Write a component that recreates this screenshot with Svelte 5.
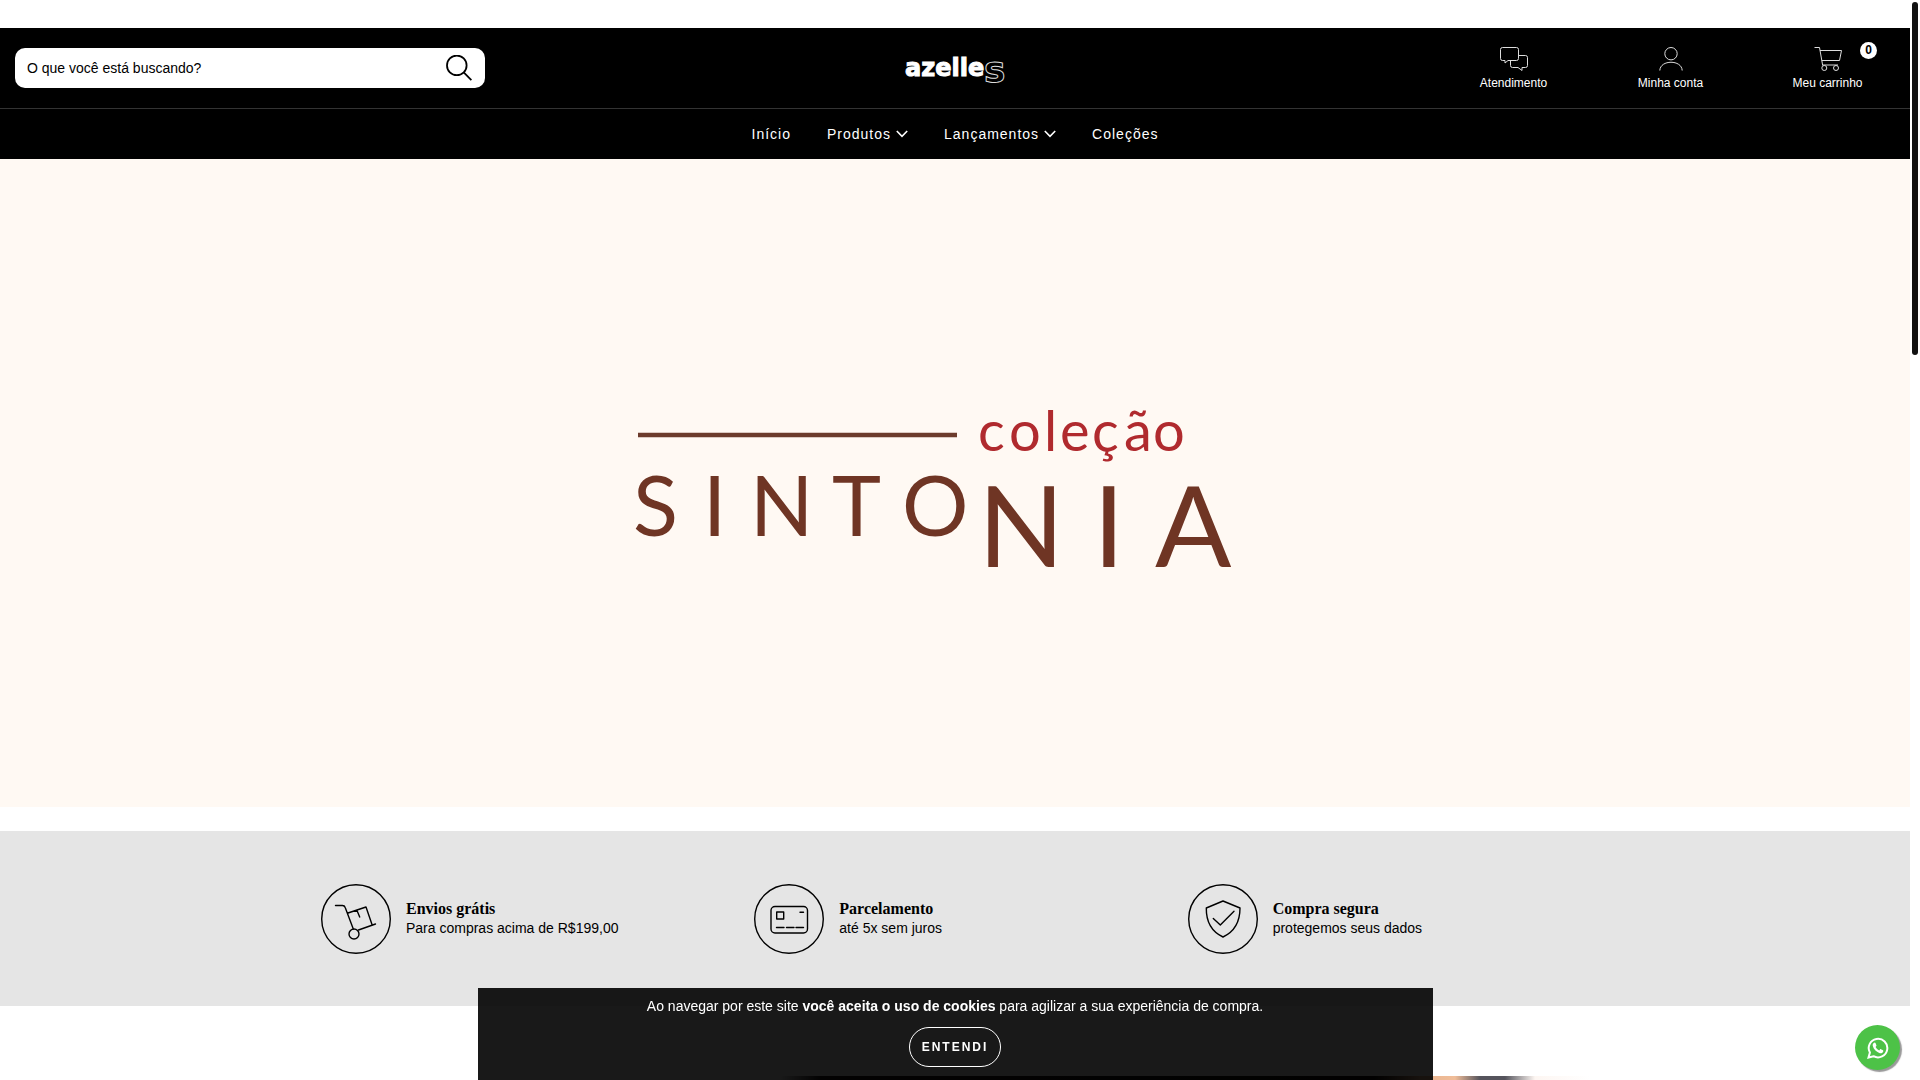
<script>
  const menu = [
    { label: 'Início' },
    { label: 'Produtos', sub: true },
    { label: 'Lançamentos', sub: true },
    { label: 'Coleções' }
  ];
  const benefits = [
    { icon: 'truck', title: 'Envios grátis', text: 'Para compras acima de R$199,00' },
    { icon: 'card', title: 'Parcelamento', text: 'até 5x sem juros' },
    { icon: 'shield', title: 'Compra segura', text: 'protegemos seus dados' }
  ];
  let search = $state('');
  let cookies = $state(true);
</script>

<div class="page">
  <header>
    <div class="top">
      <form class="search" role="search" onsubmit={(e) => e.preventDefault()}>
        <input type="text" aria-label="Buscar" placeholder="O que você está buscando?" bind:value={search} />
        <button type="submit" aria-label="Buscar">
          <svg width="26" height="26" viewBox="0 0 26 26" fill="none" stroke="#000" stroke-width="1.8">
            <circle cx="10.8" cy="10.4" r="9.8" /><path d="M17.7 17.4 25.4 25.2" />
          </svg>
        </button>
      </form>

      <a class="logo" href="#inicio" aria-label="azelles">
        <svg width="104" height="48" viewBox="0 0 104 48">
          <text x="2" y="32" class="brand">azelle</text>
          <text x="81" y="38" class="brand-s">s</text>
        </svg>
      </a>

      <div class="tools">
        <a href="#atendimento">
          <svg width="28" height="24" viewBox="0 0 28 24">
            <path d="M10 13.5H8L5 16V13.5H2.5Q.5 13.5 .5 11.5V2.5Q.5.5 2.5.5H16.5Q18.5.5 18.5 2.5V11.5Q18.5 13.5 16.5 13.5H10" />
            <path d="M19 8.5H25.5Q27.5 8.5 27.5 10.5V18.5Q27.5 20.5 25.5 20.5H22V23.5L18 20.5H12.5Q10.5 20.5 10.5 18.5V14" />
          </svg>
          <span>Atendimento</span>
        </a>
        <a href="#conta">
          <svg width="24" height="24" viewBox="0 0 24 24">
            <circle cx="12" cy="6.7" r="6.2" />
            <path d="M.8 23.5C1.2 12.5 22.8 12.5 23.2 23.5" />
          </svg>
          <span>Minha conta</span>
        </a>
        <a href="#carrinho">
          <svg width="28" height="24" viewBox="0 0 28 24">
            <path d="M.5.5H5.5L8.7 18.5M6 3.5H27.5L25.5 13.5H7.8M8.700 18H24" />
            <circle cx="10.3" cy="21" r="2.5" /><circle cx="22" cy="21" r="2.5" />
          </svg>
          <span>Meu carrinho</span>
          <b class="badge">0</b>
        </a>
      </div>
    </div>

    <nav>
      {#each menu as item}
        <a href="#menu">
          {item.label}
          {#if item.sub}
            <svg width="12" height="8" viewBox="0 0 12 8" fill="none" stroke="#fff" stroke-width="1.6"><path d="M.8 1 6 6.3 11.2 1" /></svg>
          {/if}
        </a>
      {/each}
    </nav>
  </header>

  <a class="hero" href="#sintonia" aria-label="Coleção Sintonia">
    <svg viewBox="0 0 1910 648">
      <path d="M638 276H957" stroke="#6c3b2c" stroke-width="4.5" />
      <text class="small" y="292" x="978 1009 1044 1060 1092 1124 1153">coleção</text>
      <text class="mid" y="377" x="633 703 750 832 902">SINTO</text>
      <text class="big" y="408" x="978 1093 1155">NIA</text>
    </svg>
  </a>

  <section class="benefits">
    <div class="row">
      {#each benefits as b}
        <div class="benefit">
          <svg width="70" height="70" viewBox="0 0 70 70" fill="none" stroke="#000" stroke-width="1.4" stroke-linecap="round" stroke-linejoin="round">
            <circle cx="35" cy="35" r="34.3" />
            {#if b.icon === 'truck'}
              <path d="M14.5 21.5H21.5Q23.5 21.5 24.2 23.5L32.3 45M27 29 45 23 51 40.5M37.5 46 54.5 40M36 26.5 38.7 33" />
              <circle cx="33" cy="50" r="5" />
            {:else if b.icon === 'card'}
              <rect x="17" y="22.5" width="36.5" height="26.5" rx="4" />
              <rect x="22.7" y="28" width="7" height="7" />
              <path d="M46 28.3H49.5M22.5 43.5H30M32.5 43.5H40M42 43.5H49.5" />
            {:else}
              <path d="M35 17 52 24Q52 45 35 53 18 45 18.3 24ZM25.3 34.5 32.3 41 46 27.3" />
            {/if}
          </svg>
          <div>
            <h2>{b.title}</h2>
            <p>{b.text}</p>
          </div>
        </div>
      {/each}
    </div>
  </section>

  <div class="photo"></div>
</div>

{#if cookies}
  <div class="overlay">
    <div class="cookies">
      <p>Ao navegar por este site <strong>você aceita o uso de cookies</strong> para agilizar a sua experiência de compra.</p>
      <button type="button" onclick={() => (cookies = false)}>ENTENDI</button>
    </div>
  </div>
{/if}

<a class="whats" href="#whatsapp" aria-label="WhatsApp">
  <svg width="22" height="22" viewBox="0 0 22 22">
    <path d="M1.5 20.5 2.9 15.6A9.3 9.3 0 1 1 6.5 19.2Z" fill="none" stroke="#fff" stroke-width="2" />
    <path d="M7.3 5.7C6 6.3 5.4 7.6 5.8 9.1 6.7 12.4 9.6 15.3 12.9 16.2 14.5 16.5 15.8 15.8 16.3 14.2 16.4 13.7 16.3 13.4 16 13.2L13.9 12.2C13.5 12 13.2 12.1 13 12.4L12.2 13.4C10.6 12.8 9.3 11.6 8.6 10.1L9.3 9.1C9.5 8.8 9.5 8.6 9.4 8.3L8.5 6.1C8.3 5.7 7.9 5.5 7.3 5.7Z" fill="#fff" />
  </svg>
</a>
<div class="scroll"></div>

<style>
  :global(body) { background: #fff; font-family: 'Liberation Sans', Arial, sans-serif; font-size: 14px; color: #000; }
  a { color: inherit; text-decoration: none; }
  svg { display: block; }
  .page { margin-right: 10px; padding-top: 28px; }
  header { background: #000; color: #fff; }
  .top { display: grid; grid-template-columns: 1fr auto 1fr; align-items: center; height: 80px; border-bottom: 1px solid #333; }
  .search { display: flex; align-items: center; width: 470px; height: 40px; margin-left: 15px; background: #fff; border-radius: 10px; overflow: hidden; }
  .search input { flex: 1; min-width: 0; height: 40px; padding: 0 12px; border: 0; outline: 0; background: none; font: inherit; color: #000; }
  .search input::placeholder { color: #000; opacity: 1; }
  .search button { padding: 0 13px; border: 0; background: none; cursor: pointer; }
  .brand { font: bold 24px 'DejaVu Sans', sans-serif; fill: #fff; stroke: #fff; stroke-width: 1; }
  .brand-s { font: bold 36px 'DejaVu Sans', sans-serif; fill: #000; stroke: #ddd; stroke-width: 1; }
  .tools { display: flex; justify-content: flex-end; padding: 2px 4px 0 0; }
  .tools a { position: relative; display: flex; flex-direction: column; align-items: center; gap: 4px; width: 157px; font-size: 12px; line-height: 16px; }
  .tools svg { fill: none; stroke: #ddd; stroke-width: 1; }
  .badge { position: absolute; top: -5px; right: 29px; width: 17px; height: 17px; border-radius: 50%; background: #fff; color: #000; line-height: 17px; text-align: center; }
  nav { display: flex; justify-content: center; gap: 36px; height: 50px; }
  nav a { display: flex; align-items: center; gap: 5px; letter-spacing: 1px; }
  .hero { display: block; background: #fff9f3; }
  .hero svg { width: 100%; height: auto; }
  .hero text { font-family: Lato, 'Open Sans', sans-serif; fill: #6f3524; }
  .hero .small { font-size: 56px; fill: #b02a2e; }
  .hero .mid { font-size: 83px; }
  .hero .big { font-size: 113px; }
  .benefits { margin-top: 24px; padding: 53px 0 52px; background: #e5e5e5; }
  .row { display: grid; grid-template-columns: repeat(3, 1fr); max-width: 1300px; margin: 0 auto; }
  .benefit { display: flex; align-items: center; gap: 15px; padding-left: 16px; }
  h2 { margin: 0; font: bold 16px/18px 'Liberation Serif', serif; }
  p { margin: 0; line-height: 20px; }
  .photo { height: 4px; margin-top: 70px; background: linear-gradient(90deg, #fff 780px, #211c1c 820px, #19120f 1375px, #e9b48f 1420px, #f0bd99 1455px, #55545c 1480px, #55545c 1505px, #fdf6f2 1535px, #fff 1590px); }
  .overlay { position: fixed; right: 10px; bottom: 0; left: 0; display: flex; justify-content: center; }
  .cookies { display: flex; flex-direction: column; align-items: center; gap: 11px; box-sizing: border-box; width: 50%; padding: 8px 15px 13px; background: rgba(0, 0, 0, 0.9); color: #fff; text-align: center; }
  .cookies button { height: 40px; padding: 0 12px; border: 1px solid #fff; border-radius: 20px; background: none; color: #fff; font: bold 12px 'Liberation Sans', Arial, sans-serif; letter-spacing: 2px; cursor: pointer; }
  .whats { position: fixed; right: 20px; bottom: 10px; display: grid; place-items: center; width: 45px; height: 45px; border-radius: 50%; background: #4dc247; box-shadow: 2px 2px 1px #999; }
  .scroll { position: fixed; top: 2px; right: 2px; width: 6px; height: 353px; border-radius: 3px; background: #111; }
</style>
